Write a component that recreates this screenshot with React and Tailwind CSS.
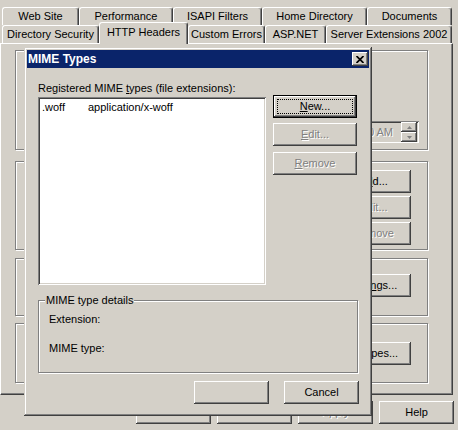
import React from 'react';

const RAISED = 'shadow-[inset_-1px_-1px_#404040,inset_1px_1px_#fff,inset_-2px_-2px_#808080,inset_2px_2px_#d4d0c8]';
const SUNKEN = 'shadow-[inset_1px_1px_#808080,inset_-1px_-1px_#fff,inset_2px_2px_#404040,inset_-2px_-2px_#d4d0c8]';
const ETCHED = 'border border-[#808080] shadow-[inset_1px_1px_#fff,1px_1px_#fff]';
const DISABLED = 'text-[#808080] [text-shadow:1px_1px_0_#fff]';

const Button = ({ children, disabled, className = '' }) => (
  <div className={`flex items-center justify-center shrink-0 bg-[#d4d0c8] ${RAISED} ${disabled ? DISABLED : ''} ${className}`}>
    {children}
  </div>
);

const Tab = ({ label, w, selected }) => (
  <div
    className={`flex items-center justify-center shrink-0 bg-[#d4d0c8] border-t border-l border-r border-t-white border-l-white border-r-[#404040] rounded-t-[3px] shadow-[inset_-1px_0_#808080] ${
      selected ? 'h-[22px] -mb-[1px] relative z-10 pb-[3px]' : 'h-[18px]'
    } ${w}`}
  >
    {label}
  </div>
);

const ROW1 = [
  { label: 'Web Site', w: 'w-[77px]' },
  { label: 'Performance', w: 'w-[94px]' },
  { label: 'ISAPI Filters', w: 'w-[89px]' },
  { label: 'Home Directory', w: 'w-[105px]' },
  { label: 'Documents', w: 'w-[85px]' },
];

const ROW2 = [
  { label: 'Directory Security', w: 'w-[97px]' },
  { label: 'HTTP Headers', w: 'w-[89px]', selected: true },
  { label: 'Custom Errors', w: 'w-[77px]' },
  { label: 'ASP.NET', w: 'w-[61px]' },
  { label: 'Server Extensions 2002', w: 'w-[126px]' },
];

const Spin = ({ up }) => (
  <div className={`flex items-center justify-center w-[16px] h-[10px] bg-[#d4d0c8] ${RAISED}`}>
    <svg width="5" height="3" viewBox="0 0 5 3">
      <path d={up ? 'M2.5 0 L5 3 L0 3 Z' : 'M0 0 L5 0 L2.5 3 Z'} fill="#808080" />
    </svg>
  </div>
);

const MimeDialog = () => (
  <div className="absolute left-[24px] top-[47px] w-[348px] h-[369px] p-[3px] bg-[#d4d0c8] flex flex-col shadow-[inset_-1px_-1px_#404040,inset_1px_1px_#d4d0c8,inset_-2px_-2px_#808080,inset_2px_2px_#fff]">
    <div className="flex items-center justify-between h-[18px] bg-[#0a246a] pl-[1px] pr-[1px]">
      <span className="font-bold text-white text-[12px]">MIME Types</span>
      <div className={`flex items-center justify-center w-[16px] h-[14px] bg-[#d4d0c8] ${RAISED}`}>
        <svg width="8" height="7" viewBox="0 0 8 7">
          <path d="M0.5 0 L7.5 7 M7.5 0 L0.5 7" stroke="#000" strokeWidth="1.7" />
        </svg>
      </div>
    </div>

    <div className="flex flex-col pl-[11px] pr-[10px]">
      <div className="mt-[14px] h-[13px]">
        Registered MIME <span className="underline">t</span>ypes (file extensions):
      </div>

      <div className="flex items-start mt-[2px]">
        <div className={`w-[228px] h-[188px] bg-white pl-[4px] pt-[4px] ${SUNKEN}`}>
          <div className="flex">
            <span className="w-[46px]">.woff</span>
            <span>application/x-woff</span>
          </div>
        </div>
        <div className="flex flex-col ml-[7px] -mt-[2px]">
          <div className="flex w-[84px] h-[23px] border border-black">
            <div className={`flex flex-1 p-[3px] ${RAISED}`}>
              <div className="flex flex-1 items-center justify-center border border-dotted border-black">
                <span><span className="underline">N</span>ew...</span>
              </div>
            </div>
          </div>
          <Button disabled className="w-[84px] h-[23px] mt-[5px]">
            <span><span className="underline">E</span>dit...</span>
          </Button>
          <Button disabled className="w-[84px] h-[23px] mt-[6px]">
            <span><span className="underline">R</span>emove</span>
          </Button>
        </div>
      </div>

      <div className={`relative mt-[15px] w-[320px] h-[73px] pl-[10px] pt-[12px] ${ETCHED}`}>
        <span className="absolute left-[6px] -top-[7px] px-[1px] bg-[#d4d0c8]">MIME type details</span>
        <div className="h-[13px]">Extension:</div>
        <div className="h-[13px] mt-[16px]">MIME type:</div>
      </div>

      <div className="flex justify-end gap-[15px] mt-[8px]">
        <Button className="w-[75px] h-[23px]" />
        <Button className="w-[75px] h-[23px]">Cancel</Button>
      </div>
    </div>
  </div>
);

export default function App() {
  return (
    <div className="relative w-[458px] h-[430px] overflow-hidden bg-[#d4d0c8] text-black text-[11px] leading-[13px] font-['Liberation_Sans',Arial,sans-serif]">
      <div className="pt-[7px]">
        <div className="flex pl-[2px]">
          {ROW1.map((t) => (
            <Tab key={t.label} {...t} />
          ))}
        </div>
        <div className="flex items-end h-[18px] pl-[2px]">
          {ROW2.map((t) => (
            <Tab key={t.label} {...t} />
          ))}
        </div>

        {/* tab page, mostly hidden behind the dialog */}
        <div className="flex flex-col w-[453px] h-[352px] pl-[14px] border border-t-white border-l-white border-r-[#404040] border-b-[#404040] shadow-[inset_-1px_-1px_#808080]">
          <div className={`mt-[6px] w-[413px] h-[100px] flex flex-col items-end pr-[8px] ${ETCHED}`}>
            <div className={`flex items-center mt-[70px] w-[112px] h-[22px] pl-[3px] pr-[2px] bg-[#d4d0c8] ${SUNKEN}`}>
              <span className={`flex-1 text-right pr-[8px] ${DISABLED}`}>12:00:00 AM</span>
              <div className="flex flex-col">
                <Spin up />
                <Spin />
              </div>
            </div>
          </div>

          <div className={`mt-[11px] w-[413px] h-[89px] flex flex-col items-end gap-[3px] pt-[8px] pr-[16px] ${ETCHED}`}>
            <Button className="w-[75px] h-[23px]">
              <span>A<span className="underline">d</span>d...</span>
            </Button>
            <Button disabled className="w-[75px] h-[23px]">
              <span><span className="underline">E</span>dit...</span>
            </Button>
            <Button disabled className="w-[75px] h-[23px]">
              <span>Remove</span>
            </Button>
          </div>

          <div className={`mt-[8px] w-[413px] h-[58px] flex flex-col items-end pt-[15px] pr-[16px] ${ETCHED}`}>
            <Button className="w-[96px] h-[23px]">
              <span>Edit Rati<span className="underline">n</span>gs...</span>
            </Button>
          </div>

          <div className={`mt-[7px] w-[413px] h-[60px] flex flex-col items-end pt-[18px] pr-[16px] ${ETCHED}`}>
            <Button className="w-[96px] h-[23px]">
              <span>MIME Types...</span>
            </Button>
          </div>
        </div>

        <div className="flex gap-[6px] pl-[136px] mt-[6px]">
          <Button className="w-[75px] h-[23px]">OK</Button>
          <Button className="w-[75px] h-[23px]">Cancel</Button>
          <Button disabled className="w-[75px] h-[23px]">Apply</Button>
          <Button className="w-[75px] h-[23px]">Help</Button>
        </div>
      </div>

      <MimeDialog />
    </div>
  );
}
